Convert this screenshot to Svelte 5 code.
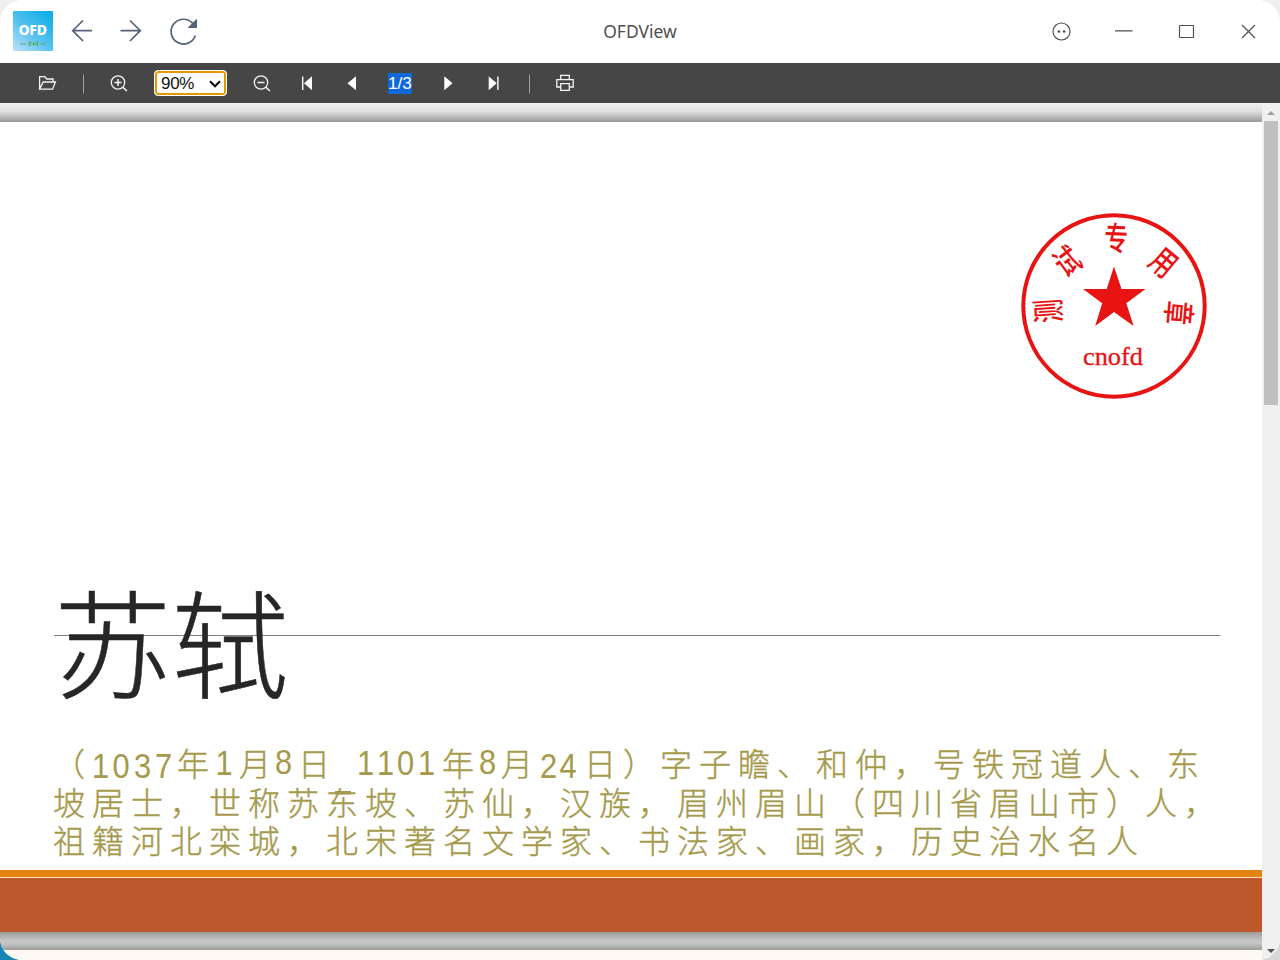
<script>
  const pitch = 39;
  const spread = (text, from) => [...text].map((_, i) => from + i * pitch).join(' ');
  const runs = [
    { t: '（', x: '53', y: 776 }, { t: '年', x: '177', y: 776 }, { t: '月', x: '239', y: 776 }, { t: '日', x: '298', y: 776 },
    { t: '年', x: '442', y: 776 }, { t: '月', x: '501', y: 776 }, { t: '日', x: '584', y: 776 }, { t: '）', x: '623', y: 776 },
    ...[
      { t: '字子瞻、和仲，号铁冠道人、东', from: 660, y: 776 },
      { t: '坡居士，世称苏东坡、苏仙，汉族，眉州眉山（四川省眉山市）人，', from: 53, y: 815 },
      { t: '祖籍河北栾城，北宋著名文学家、书法家、画家，历史治水名人', from: 53, y: 853 }
    ].map((l) => ({ t: l.t, x: spread(l.t, l.from), y: l.y }))
  ];
  const narrow = 0.88;
  const digits = [
    { t: '1037', x: [92, 112.5, 134, 155], y: 778 },
    { t: '1', x: [215.5], y: 775 },
    { t: '8', x: [275], y: 774 },
    { t: '1101', x: [357, 377, 397, 418], y: 775 },
    { t: '8', x: [479], y: 774 },
    { t: '24', x: [540, 559.5], y: 778 }
  ];
  const sealChars = [
    { ch: '测', x: 1048, y: 311, r: -94 },
    { ch: '试', x: 1067, y: 261, r: -37 },
    { ch: '专', x: 1116, y: 238, r: 2 },
    { ch: '用', x: 1164, y: 262, r: 40 },
    { ch: '章', x: 1179, y: 313, r: 95 }
  ];
</script>

<div class="desktop">
  <div class="window">
    <header>
      <svg class="logo" width="40" height="40" viewBox="0 0 40 40">
        <defs>
          <linearGradient id="sky" x1="0" y1="1" x2="0.8" y2="0">
            <stop offset="0" stop-color="#c2e1fa" /><stop offset="0.5" stop-color="#55c2ef" /><stop offset="1" stop-color="#10afe7" />
          </linearGradient>
        </defs>
        <rect width="40" height="40" rx="1" fill="url(#sky)" />
        <text x="5.500" y="24" font-size="14" font-weight="800" textLength="28.500" fill="#fff">OFD</text>
        <path d="M7 33h6M26.500 33h6" stroke="#55ae65" stroke-width="1.200" />
        <path d="M15.500 31l3 .3-3 1.700c3-.5 3 2 0 2M20.500 31v4M22.500 30.500h2v4.500M19.500 33h5" fill="none" stroke="#4cae50" stroke-width="1" />
      </svg>
      <svg class="nav" width="150" height="40" viewBox="64 11 150 40" fill="none" stroke="#55627a" stroke-width="1.700">
        <path d="M92 30.700H73M83 20.500L72.700 30.700 83 41" />
        <path d="M120.500 30.700H140M130 20.500l10.300 10.200L130 41" />
        <path d="M195.300 35.500A12.400 12.400 0 1 1 192.600 23.200" />
        <path d="M197 18.500v9.500h-9.500z" fill="#55627a" stroke="none" />
      </svg>
      <h1>OFDView</h1>
      <svg class="controls" width="220" height="40" viewBox="1045 11 220 40" fill="none" stroke="#505050" stroke-width="1.200">
        <circle cx="1061.500" cy="31.500" r="8.500" />
        <g fill="#505050" stroke="none"><circle cx="1058.900" cy="31.500" r="1.300" /><circle cx="1064.100" cy="31.500" r="1.300" /></g>
        <path d="M1115 30.800h17.500" />
        <rect x="1179.500" y="25.500" width="14" height="12" rx="0.500" />
        <path d="M1242 25l13 13M1255 25l-13 13" />
      </svg>
    </header>

    <nav class="toolbar">
      <svg width="154" height="40" viewBox="0 0 154 40" fill="none" stroke="#f4f4f4" stroke-width="1.300">
        <path d="M39.600 26V13.700h5.200l2 2.300h6.200v3M39.600 26.200h13l2.800-7.200H43.200z" />
        <path d="M83.500 11.500v19" stroke="#a0a0a0" stroke-width="1" />
        <circle cx="118" cy="19.500" r="6.700" /><path d="M114.500 19.500h7M118 16v7M123 24.400l4 3.600" stroke-width="1.500" />
      </svg>
      <div class="zoom">
        <span>90%</span>
        <svg width="12" height="8" viewBox="0 0 12 8"><path d="M1 1.200l5 5 5-5" fill="none" stroke="#111" stroke-width="2.200" /></svg>
      </div>
      <svg width="161" height="40" viewBox="227 0 161 40" fill="none" stroke="#f4f4f4" stroke-width="1.300">
        <circle cx="261" cy="19.500" r="6.700" /><path d="M257.500 19.500h7M266 24.400l4 3.600" stroke-width="1.500" />
        <path d="M302.700 13.500v13.500" stroke-width="1.500" />
        <path d="M312 13.200v14l-8-7zM356 13.200v14l-8.500-7z" fill="#fff" stroke="none" />
      </svg>
      <span class="page-number">1/3</span>
      <svg width="188" height="40" viewBox="412 0 188 40" fill="none" stroke="#f4f4f4" stroke-width="1.300">
        <path d="M444.300 13.200v14l8.200-7zM488.700 13.200v14l8-7z" fill="#fff" stroke="none" />
        <path d="M497.900 13.500v13.500" stroke-width="1.500" />
        <path d="M529.500 11.500v19" stroke="#a0a0a0" stroke-width="1" />
        <path d="M560.700 16.600v-4.200h8.600v4.200M560.700 24h-3.900v-7.300h16.400V24h-3.900M560.700 20.700h8.600v6.600h-8.600z" />
      </svg>
    </nav>

    <main>
      <div class="document">
        <div class="gap-top"></div>
        <svg class="sheet" width="1262" height="810" viewBox="0 122 1262 810">
          <rect y="122" width="1262" height="810" fill="#fff" />
          <circle cx="1114" cy="306" r="90.700" fill="none" stroke="#e81313" stroke-width="4" />
          <path fill="#e81313" d="M1114 266.500l7.500 22.500h24l-19.200 14.300 7.300 22.700-19.600-13.900-18.800 13.900 7-22.700-19.200-14.300h23.700z" />
          {#each sealChars as c}
            <text class="stamp" transform="translate({c.x} {c.y}) rotate({c.r}) scale(0.72 1)" x="0" y="12.500">{c.ch}</text>
          {/each}
          <text class="stamp-name" x="1083" y="365" textLength="60" lengthAdjust="spacingAndGlyphs">cnofd</text>
          <rect x="54" y="635" width="1166.500" height="1" fill="#7c817c" />
          <text class="title" x="53.500 171.500" y="690">苏轼</text>
          {#each runs as r}
            <text class="copy" x={r.x} y={r.y}>{r.t}</text>
          {/each}
          <rect x="335" y="791" width="16" height="3.500" fill="#a5994b" />
          {#each digits as d}
            <text class="digits" transform="scale({narrow} 1)" x={d.x.map((v) => v / narrow).join(' ')} y={d.y}>{d.t}</text>
          {/each}
          <rect y="870" width="1262" height="7" fill="#e48312" />
          <rect y="877" width="1262" height="1" fill="#ffe4b8" />
          <rect y="878" width="1262" height="54" fill="#bd582c" />
        </svg>
        <div class="gap-bottom"></div>
        <div class="next-page"></div>
      </div>
      <div class="scrollbar">
        <svg width="18" height="18" viewBox="0 0 18 18"><path d="M5 12l4-4 4 4z" fill="#a0a0a0" /></svg>
        <div class="thumb"></div>
        <svg class="down" width="18" height="18" viewBox="0 0 18 18"><path d="M5 7h8l-4 4z" fill="#505050" /></svg>
      </div>
    </main>
  </div>
</div>

<style>
  :global(body) { margin: 0; overflow: hidden; }
  .desktop { width: 1280px; height: 960px; background: linear-gradient(90deg, #1585b5 0 40px, #d8d8d8 60px) bottom / 100% 60px no-repeat, #efefef; }
  .window { width: 1280px; height: 960px; border-radius: 22px; overflow: hidden; display: flex; flex-direction: column; background: #fff; }
  header { height: 63px; flex: none; box-sizing: border-box; padding: 11px 15px 12px 13px; display: grid; grid-template-columns: 51px 150px minmax(0, 1fr) 220px; }
  h1 { margin: 0; padding-left: 21px; font: 400 17.5px/41px 'Noto Sans', sans-serif; color: #505050; text-align: center; }
  .logo { font-family: 'Noto Sans', sans-serif; }
  .toolbar { height: 40px; flex: none; background: #464646; display: flex; align-items: center; }
  .toolbar svg { flex: none; }
  .zoom { box-sizing: border-box; width: 73px; height: 26px; border: 1px solid #fff; border-radius: 4px; box-shadow: inset 0 0 0 2px #e59700; background: #fff; display: flex; align-items: center; justify-content: space-between; padding: 1px 5px 0 6px; font: 17px/24px 'Liberation Sans', sans-serif; color: #111; }
  .zoom span { letter-spacing: -0.3px; }
  .page-number { width: 24px; height: 21px; background: #1068d9; color: #fff; font: 17.200px/21px 'Liberation Sans', sans-serif; white-space: nowrap; }
  main { flex: 1; display: flex; min-height: 0; }
  .document { width: 1262px; display: flex; flex-direction: column; }
  .gap-top { height: 19px; background: linear-gradient(#f2f2f2, #dedede 45%, #999); }
  .sheet { display: block; flex: none; }
  .gap-bottom { height: 18px; background: linear-gradient(#9e9e9e, #c6c6c6 50%, #c4c4c4 65%, #9c9c9c); }
  .next-page { flex: 1; background: #fef9f3; }
  .scrollbar { width: 18px; background: #f0f0f0; display: flex; flex-direction: column; align-items: center; }
  .scrollbar svg { flex: none; }
  .thumb { width: 14px; height: 284px; background: #c0c0c0; }
  .down { margin-top: auto; }
  .stamp { font: 500 33px 'Noto Sans CJK SC', sans-serif; fill: #e81313; text-anchor: middle; }
  .stamp-name { font: 24.5px 'Liberation Serif', serif; fill: #e81313; stroke: #e81313; stroke-width: 0.3px; }
  .title { font: 300 118px 'Noto Sans CJK SC', sans-serif; fill: #262626; stroke: #262626; stroke-width: 0.5px; }
  .copy { font: 300 32px 'Noto Sans CJK SC', sans-serif; fill: #a5994b; stroke: #a5994b; stroke-width: 0.4px; }
  .digits { font: 400 35px 'Liberation Sans', sans-serif; fill: #a5994b; }
</style>
